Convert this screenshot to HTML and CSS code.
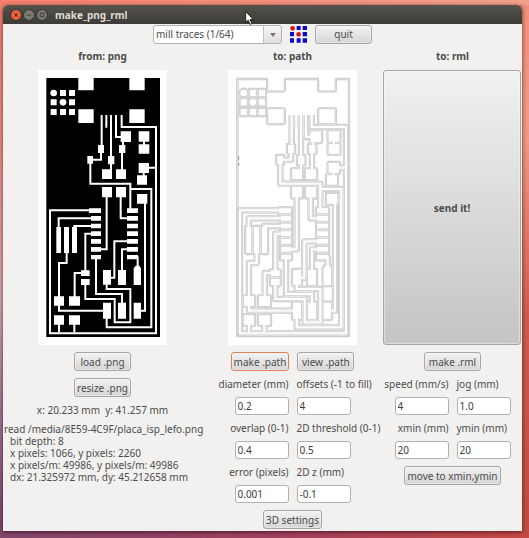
FILE: index.html
```
<!DOCTYPE html>
<html lang="en">
<head>
    <meta charset="UTF-8">
    <meta name="viewport" content="width=device-width, initial-scale=1.0">
    <title>make_png_rml</title>
    <link rel="stylesheet" href="styles.css">
</head>
<body>
    <div class="window">
        <header class="titlebar">
            <button class="wm close" aria-label="Close"><svg viewBox="0 0 10 10"><path d="M3.2 3.2l3.6 3.6M6.8 3.2l-3.6 3.6"/></svg></button>
            <button class="wm" aria-label="Minimize"><svg viewBox="0 0 10 10"><path d="M3 5h4"/></svg></button>
            <button class="wm" aria-label="Maximize"><svg viewBox="0 0 10 10"><path d="M3.2 3.2h3.6v3.6h-3.6z"/></svg></button>
            <h1>make_png_rml</h1>
        </header>

        <div class="toolbar">
            <div class="combo">
                <select aria-label="Process">
                    <option>mill traces (1/64)</option>
                </select>
            </div>
            <svg class="logo" viewBox="0 0 51 51">
                <path fill="#0a0ac8" d="M20 0h12v12H20zM38 0h13v12H38zM0 18h12v13H0zM38 18h13v13H38zM0 37h12v13H0zM20 37h12v13H20zM38 37h13v13H38z"/>
                <circle cx="8" cy="7" r="7" fill="#e01010"/>
                <circle cx="26" cy="25" r="7" fill="#e01010"/>
            </svg>
            <button class="quit">quit</button>
        </div>

        <main class="columns">
            <section class="column">
                <h2>from: png</h2>
                <svg class="board" viewBox="9 6 387 825">
                    <defs>
                        <g id="traces">
                            <path d="M200 141V232M198 250V275H166V347H286V425M228 141V305M243 141V207H260M260 141V177H363V796H45V427H165"/>
                            <path d="M214 141V179M264 215V240M261 250V310M327 215V235M340 299H362M326 310V325"/>
                            <path d="M286 363H349V778H215V740M330 400V728H310M215 380V544H190M257 380V451H285"/>
                            <path d="M175 451H71V480M175 474H118V480M175 497H151V610M145 615H119V690M95 550V585H72V690"/>
                            <path d="M151 645V693H239V763H286V663H215V640M225 629H238V520H285M183 565V678H261V710"/>
                            <path d="M261 610V544H285M300 568H308V600M72 705V728H210M72 765V793M118 765V793"/>
                        </g>
                        <g id="pads">
                            <path d="M130 30h46v37h-46zM283 30h46v37h-46zM130 124h46v41h-46zM283 124h46v41h-46z"/>
                            <path d="M75 66h18v18h-18zM102 66h18v18h-18zM47 94h18v18h-18zM102 94h18v18h-18zM47 123h18v18h-18zM75 123h18v18h-18zM102 123h18v18h-18z"/>
                            <circle cx="56" cy="75" r="10"/>
                            <circle cx="84" cy="103" r="10"/>
                            <path d="M189 231h18v24h-18zM157 264h17v23h-17zM219 264h19v25h-19zM252 231h19v24h-19z"/>
                            <path d="M201 304h30v29h-30zM243 304h30v29h-30zM201 357h30v31h-30zM243 357h30v31h-30z"/>
                            <path d="M257 190h31v32h-31zM311 190h32v31h-32zM311 229h32v28h-32zM311 285h31v30h-31zM306 322h30v28h-30zM306 378h31v29h-31z"/>
                            <path d="M162 421h36v14h-36zM168 444h30v14h-30zM168 467h30v14h-30zM168 490h30v14h-30zM168 513h30v14h-30zM168 537h30v14h-30zM168 561h30v13h-30z"/>
                            <path d="M276 421h33v14h-33zM276 444h33v14h-33zM276 467h33v14h-33zM276 490h33v14h-33zM276 513h33v14h-33zM276 537h33v14h-33zM276 561h33v13h-33z"/>
                            <path d="M64 477h14v78h-14zM87 477h15v78h-15zM111 477h15v78h-15zM138 607h26v17h-26zM138 633h26v18h-26z"/>
                            <path d="M204 606h24v44h-24zM249 606h24v45h-24zM296 651v-50l6-8h11l5 8v50z"/>
                            <path d="M204 704h24v48h-24zM249 704h24v48h-24zM296 704h22v48h-22z"/>
                            <path d="M57 685h30v28h-30zM102 685h33v28h-33zM57 742h30v28h-30zM102 742h33v28h-33z"/>
                        </g>
                    </defs>
                    <rect x="34" y="30" width="341" height="777" fill="#000"/>
                    <use href="#traces" fill="none" stroke="#fff" stroke-width="6"/>
                    <use href="#pads" fill="#fff"/>
                </svg>
                <button>load .png</button>
                <button>resize .png</button>
                <p>x: 20.233 mm&nbsp; y: 41.257 mm</p>
                <div class="info">
                    <p>read /media/8E59-4C9F/placa_isp_lefo.png</p>
                    <ul>
                        <li>bit depth: 8</li>
                        <li>x pixels: 1066, y pixels: 2260</li>
                        <li>x pixels/m: 49986, y pixels/m: 49986</li>
                        <li>dx: 21.325972 mm, dy: 45.212658 mm</li>
                    </ul>
                </div>
            </section>

            <section class="column">
                <h2>to: path</h2>
                <!-- offset passes around the copper, widest first -->
                <svg class="board" viewBox="9 6 387 825">
                    <g fill="none" stroke-linejoin="round">
                        <rect x="37" y="33" width="335" height="771" stroke="#c4c4c4" stroke-width="7"/>
                        <rect x="37" y="33" width="335" height="771" stroke="#e6e6e6" stroke-width="3"/>
                        <use href="#traces" stroke="#c0c0c0" stroke-width="19"/>
                        <use href="#pads" stroke="#c0c0c0" stroke-width="13"/>
                        <use href="#traces" stroke="#e8e8e8" stroke-width="15"/>
                        <use href="#pads" stroke="#e8e8e8" stroke-width="9"/>
                        <use href="#traces" stroke="#c4c4c4" stroke-width="10"/>
                        <use href="#pads" stroke="#c4c4c4" stroke-width="5"/>
                        <use href="#traces" stroke="#fff" stroke-width="7"/>
                        <use href="#pads" fill="#fff" stroke="#fff" stroke-width="1"/>
                    </g>
                    <path d="M130 6h46v30h-46zM283 6h46v30h-46zM120 6h66v23h-66zM273 6h66v23h-66z" fill="#fff"/>
                    <path d="M41 265v10M41 285v8" stroke="#555" stroke-width="2"/>
                </svg>
                <div class="row">
                    <button class="focused">make .path</button>
                    <button>view .path</button>
                </div>
                <div class="row labels">
                    <label for="diameter">diameter (mm)</label>
                    <label for="offsets">offsets (-1 to fill)</label>
                </div>
                <div class="row">
                    <input type="text" id="diameter" value="0.2">
                    <input type="text" id="offsets" value="4">
                </div>
                <div class="row labels">
                    <label for="overlap">overlap (0-1)</label>
                    <label for="threshold">2D threshold (0-1)</label>
                </div>
                <div class="row">
                    <input type="text" id="overlap" value="0.4">
                    <input type="text" id="threshold" value="0.5">
                </div>
                <div class="row labels">
                    <label for="error">error (pixels)</label>
                    <label for="z">2D z (mm)</label>
                </div>
                <div class="row">
                    <input type="text" id="error" value="0.001">
                    <input type="text" id="z" value="-0.1">
                </div>
                <button>3D settings</button>
            </section>

            <section class="column">
                <h2>to: rml</h2>
                <button class="send">send it!</button>
                <button>make .rml</button>
                <div class="row labels">
                    <label for="speed">speed (mm/s)</label>
                    <label for="jog">jog (mm)</label>
                </div>
                <div class="row">
                    <input type="text" id="speed" value="4">
                    <input type="text" id="jog" value="1.0">
                </div>
                <div class="row labels">
                    <label for="xmin">xmin (mm)</label>
                    <label for="ymin">ymin (mm)</label>
                </div>
                <div class="row">
                    <input type="text" id="xmin" value="20">
                    <input type="text" id="ymin" value="20">
                </div>
                <button>move to xmin,ymin</button>
            </section>
        </main>
        <svg class="cursor" viewBox="0 0 8 13"><path d="M.5 .5v10l2.3-2 1.7 4 1.7-.8-1.7-3.7h3z" fill="#fff" stroke="#111" stroke-width=".8"/></svg>
    </div>
</body>
</html>
```

FILE: styles.css
```
* { box-sizing: border-box; }
body {
    margin: 0; padding: 5px 7px 7px 3px; min-height: 100vh; display: flex;
    font-family: "Noto Sans", "Open Sans", sans-serif; font-size: 10px; line-height: 12px; color: #4c4c4c;
    background:
        linear-gradient(to right, #f4806c, #f2a08c) top / 100% 5px no-repeat,
        linear-gradient(to right, #80476a, #a04060 50%, #c44a44) bottom / 100% 7px no-repeat,
        linear-gradient(#f0907c, #f09a86 25%, #cc5a4c 60%, #c04a44) right / 7px 100% no-repeat,
        linear-gradient(#f4806c, #ea9284 30%, #d8a8ac 55%, #a06c90 80%, #7c4468);
}
h1, h2, p, ul { margin: 0; padding: 0; }
ul { list-style: none; }
.window {
    position: relative; flex: 1; display: flex; flex-direction: column; background: #f2f1f0;
    border-radius: 5px 5px 0 0; box-shadow: 0 1px 4px rgba(40, 0, 20, 0.7);
}

/* title bar */
.titlebar {
    display: flex; align-items: center; gap: 3px; height: 19px; padding: 0 8px;
    border-radius: 5px 5px 0 0; background: linear-gradient(#55534b, #3c3b37);
}
.titlebar h1 { margin-left: 5px; font-size: 10px; font-weight: 700; color: #dfdbd2; }
.wm { width: 10px; height: 10px; padding: 0; border: 0; border-radius: 50%; background: #7b7971; box-shadow: 0 0 0 1px #35342f; }
.wm svg { display: block; width: 10px; height: 10px; fill: none; stroke: #403f3a; }
.wm.close { background: #ee6238; }
.wm.close svg { stroke: #5c1e0c; }
.cursor { position: absolute; left: 242px; top: 6px; width: 9px; height: 14px; }

/* controls */
button, select, input { font: inherit; color: inherit; }
.toolbar button, .column button {
    height: 19px; padding: 0 2px; border: 1px solid #a9a6a2; border-radius: 3px;
    background: linear-gradient(#f3f3f3, #d5d5d5); box-shadow: inset 0 0 1px 1px rgba(255, 255, 255, 0.4);
    white-space: nowrap;
}
.column button { min-width: 57px; }
.column button.focused { border-color: #e2805c; }
.column button.send { align-self: stretch; height: 275px; margin-right: 1px; background: linear-gradient(#f1f1f1, #c4c4c4); font-weight: 700; }
input {
    width: 54px; height: 18px; padding: 0 2px; border: 1px solid #b4b0ab; border-radius: 3px; background: #fff; color: #3c3c3c;
}
.toolbar { display: flex; justify-content: center; align-items: center; gap: 8px; height: 20px; }
.toolbar .quit { width: 57px; }
.combo { position: relative; width: 129px; }
.combo select {
    display: block; appearance: none; width: 100%; height: 19px; padding: 0 20px 0 2px; border: 1px solid #b4b0ab; border-radius: 3px;
    background: linear-gradient(#c4c1bd, #c4c1bd) right 17px top / 1px 100% no-repeat,
        linear-gradient(#f6f6f6, #dedede) right / 17px 100% no-repeat, #fff;
}
.combo::after {
    content: ""; position: absolute; right: 6px; top: 8px; border: 3px solid transparent;
    border-top: 4px solid #777; border-bottom: 0; pointer-events: none;
}
.logo { width: 17px; height: 17px; }

/* three panels */
.columns { flex: 1; display: grid; grid-template-columns: 199fr 181fr 139fr; padding-top: 5px; }
.column { display: flex; flex-direction: column; align-items: center; gap: 7px; min-width: 0; }
.column h2 { font-size: 10px; line-height: 14px; font-weight: 700; }
.board { width: 129px; height: 275px; background: #fff; }
.row { display: flex; justify-content: center; gap: 8px; white-space: nowrap; }
.labels { align-self: stretch; }
.labels label { flex: 1 1 0; }
.labels label:first-child { text-align: right; }
.info { align-self: flex-start; padding-left: 1px; white-space: nowrap; }
.info ul { padding-left: 6px; }
```
